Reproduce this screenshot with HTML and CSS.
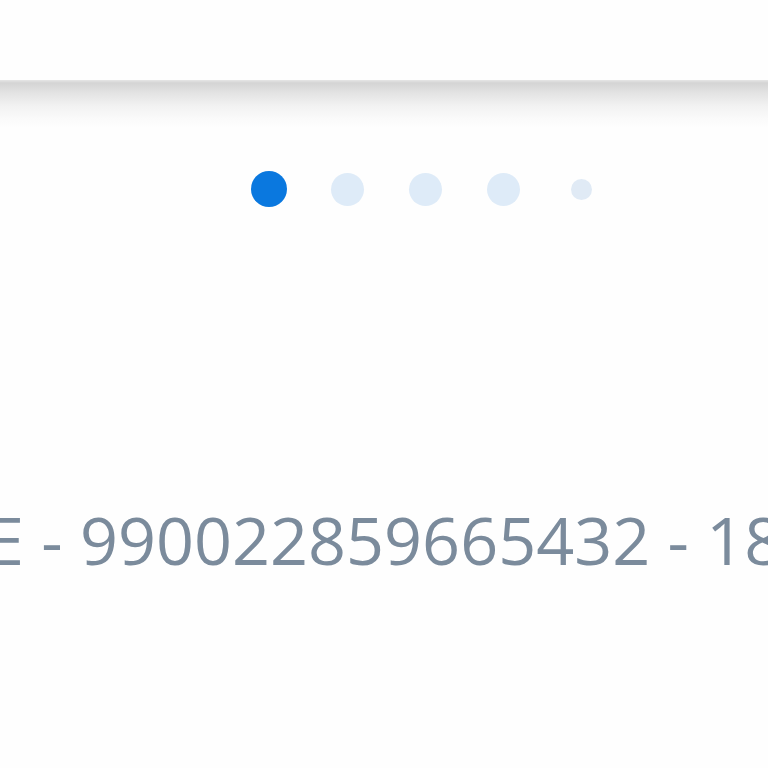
FILE: index.html
```html
<!DOCTYPE html>
<html>
<head>
<meta charset="utf-8">
<link rel="stylesheet" href="styles.css">
</head>
<body>
<header class="topbar"></header>
<div class="shade"></div>
<div class="dots">
  <span class="slot"><span class="dot dot-active"></span></span>
  <span class="slot"><span class="dot"></span></span>
  <span class="slot"><span class="dot"></span></span>
  <span class="slot"><span class="dot"></span></span>
  <span class="slot"><span class="dot dot-small"></span></span>
</div>
<div class="code">E - 990022859665432 - 18</div>
</body>
</html>
```
FILE: styles.css
```css
html, body {
  margin: 0;
  padding: 0;
  background: #fefefe;
  width: 768px;
  height: 768px;
  overflow: hidden;
  font-family: "Open Sans", "Noto Sans", sans-serif;
}
.topbar {
  height: 80px;
  background: #fefefe;
}
.shade {
  height: 48px;
  background: linear-gradient(to bottom, #e6e6e6 0px, #d4d4d4 3px, #e2e2e2 12px, #f2f2f2 26px, #fafafa 38px, #fefefe 48px);
}
.dots {
  display: flex;
  align-items: center;
  height: 36px;
  margin-top: 43px;
  padding-left: 230px;
}
.slot {
  width: 78px;
  display: flex;
  justify-content: center;
  align-items: center;
}
.dot {
  width: 33px;
  height: 33px;
  border-radius: 50%;
  background: #deebf8;
}
.dot-active {
  width: 36px;
  height: 36px;
  background: #0a78df;
}
.dot-small {
  width: 21px;
  height: 21px;
  background: #e0eaf5;
}
.code {
  margin-top: 287px;
  margin-left: -13px;
  white-space: nowrap;
  font-size: 66.5px;
  font-weight: 500;
  line-height: 90px;
  color: #7b8b9c;
}
```
